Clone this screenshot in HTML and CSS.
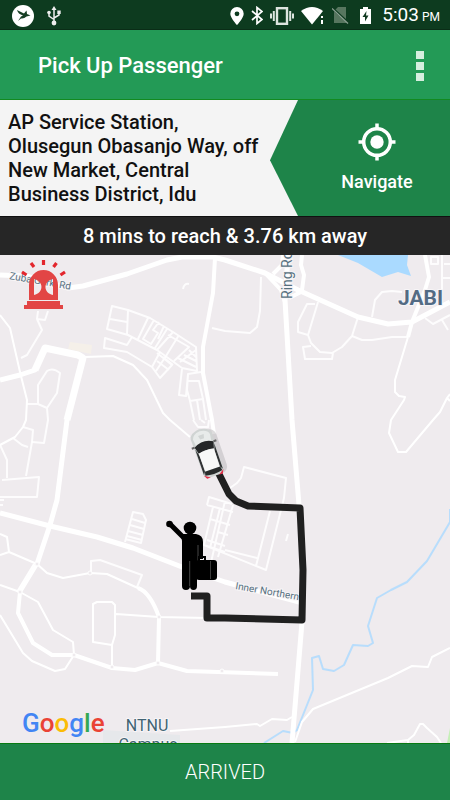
FILE: index.html
```html
<!DOCTYPE html>
<html lang="en">
<head>
<meta charset="utf-8">
<meta name="viewport" content="width=device-width, initial-scale=1">
<title>Pick Up Passenger</title>
<link rel="stylesheet" href="styles.css">
</head>
<body>
<div class="screen">
  <div class="status">
    <svg class="status-icon" width="22" height="22" viewBox="0 0 22 22" aria-hidden="true">
      <circle cx="11" cy="11" r="11" fill="#fff"/>
      <path d="M5 5 12 8.500 14.500 5.500 15 9 18.500 10.500 14.500 11.500Q12 14 9 13.500L6 16 9 11.500 11 10.500Q6 9 5 5Z" fill="#173f25"/>
    </svg>
    <svg class="status-icon" width="14" height="20" viewBox="0 0 14 20" fill="none" stroke="#eee" stroke-width="1.500" aria-hidden="true">
      <path d="M7 3V17M2 6V10L7 13.500M12 6V9L7 12"/>
      <path d="M7 0 9.500 4H4.500Z" fill="#eee" stroke="none"/>
      <circle cx="7" cy="17" r="2.400" fill="#eee" stroke="none"/>
      <circle cx="2" cy="6.500" r="1.800" fill="#eee" stroke="none"/>
      <path d="M10.300 4.500H13.700V8H10.300Z" fill="#eee" stroke="none"/>
    </svg>
    <div class="status-right">
      <svg width="14" height="18" viewBox="0 0 14 18" aria-hidden="true"><path fill="#fff" fill-rule="evenodd" d="M7 0A6.700 6.700 0 0 0 .3 6.700C.3 11 7 18 7 18S13.700 11 13.700 6.700A6.700 6.700 0 0 0 7 0ZM7 4.400A2.400 2.400 0 1 1 7 9.200A2.400 2.400 0 0 1 7 4.400Z"/></svg>
      <svg width="12" height="19" viewBox="0 0 12 19" fill="none" stroke="#fff" stroke-width="1.700" aria-hidden="true"><path d="M1 5 11 13.500 6 17.500V1.500L11 5.500 1 14"/></svg>
      <svg width="24" height="18" viewBox="0 0 24 18" fill="none" stroke="#dde5df" aria-hidden="true"><rect x="7" y="1.200" width="10" height="15.600" stroke-width="2.400"/><path d="M3.800 4V14M20.200 4V14" stroke-width="2"/><path d="M1 6.500V11.500M23 6.500V11.500" stroke-width="2"/></svg>
      <svg width="24" height="18" viewBox="0 0 24 18" fill="#fff" aria-hidden="true"><path d="M0 4Q11 -4 22 4L18 9 11 17.500Z"/><path d="M20 9h2v2h-2zM20 13h2v4h-2z"/></svg>
      <svg width="17" height="17" viewBox="0 0 17 17" aria-hidden="true"><path fill="#57765f" d="M6 0H14V12L3.500 2.500ZM2 4.500 14 15V16H2Z"/><path d="M0 1.500 16 16.500" stroke="#8fa295" stroke-width="1.200"/></svg>
      <svg class="battery" width="11" height="17" viewBox="0 0 11 17" aria-hidden="true"><path fill="#fff" d="M3 0H8V2H11V17H0V2H3Z"/><path d="M6.500 4 2.500 10H5V14.500L8.500 8.500H6Z" fill="#123b22"/></svg>
      <span class="clock"><span>5:03</span><small>PM</small></span>
    </div>
  </div>

  <header class="appbar">
    <h1>Pick Up Passenger</h1>
    <button class="menu" type="button" aria-label="More options"><i></i><i></i><i></i></button>
  </header>

  <section class="destination">
    <p class="address">AP Service Station, Olusegun Obasanjo Way, off New Market, Central Business District, Idu</p>
    <button class="navigate" type="button">
      <svg width="38" height="38" viewBox="0 0 38 38" aria-hidden="true"><circle cx="19" cy="19" r="13.300" fill="none" stroke="#fff" stroke-width="3.500"/><circle cx="19" cy="19" r="6.700" fill="#fff"/><path d="M19 .5V6M19 32V37.500M.5 19H6M32 19H37.500" stroke="#fff" stroke-width="3.500"/></svg>
      <span>Navigate</span>
    </button>
  </section>

  <p class="eta">8 mins to reach &amp; 3.76 km away</p>

  <main class="map">
    <svg class="map-canvas" viewBox="0 255 450 488" preserveAspectRatio="xMidYMin slice" role="img" aria-label="Route map">
      <rect x="0" y="255" width="450" height="488" fill="#efebee"/>
      <path d="M338 255 358 263 382 277 398 272 411 276 407 265 408 255Z" fill="#aadaff"/>
      <path d="M70 342 92 345 91 354 68 349Z" fill="#f5f0e9"/>
      <path d="M103 730 180 735V743H103Z" fill="#e6e8eb"/>
      <path d="M450 728 447 743H450Z" fill="#c5efb7"/>
      <path class="river" d="M450 509V522L427 561 407 582 391 590 377 598 368 626 373 643 368 646 353 645 344 665 334 671 323 669 319 656 312 658 313 690 297 730 293 733 283 731 264 743"/>
      <g class="lane">
        <path d="M38 311 37 319 45 320 48 311M37 319 42 330 27 355 21 358"/>
        <path d="M27 404H38V385L47 371Q53 367 60 373L57 393 47 408 48 420 44 443 32 442M38 404 47 408"/>
        <path d="M112 306 128 310 150 318 173 332 196 347 197 371 182 368 157 350 128 335 107 329ZM110 319 127 322M128 310 127 334M148 318 138 339M154 320 143 339 151 344 158 333 153 330 159 322M164 326 158 339M173 332 157 350M167 329 155 348M168 335 189 347 174 361M179 335 166 356M196 350 180 362M196 361 184 355M196 367 178 358M196 357 189 350"/>
        <path d="M132 337 127 345 105 338 104 348 127 352 152 367 160 378 172 365 157 353M160 352 152 367M166 356 156 371M157 361 169 370M163 357 173 365"/>
        <path d="M182 369 179 395 186 396 188 374 201 372M188 374 187 390 190 401 194 420M188 381 199 381 203 399 190 401M197 400 200 420M203 399 206 420"/>
        <path d="M183 289Q184 283 189 284"/>
        <path d="M212 328 225 331 250 333 257 327 260 311 261 277"/>
        <path d="M318 302 308 335 311 343 320 352 332 353 342 347 352 336 358 317M315 304H307L298 322V332L308 335M311 346 303 347 305 359H332L333 353"/>
        <path d="M352 336 362 340 372 340 392 337H408M372 317 375 300 382 292 392 291 402 292"/>
        <path d="M442 255V290M442 278H450M425 318 433 324 450 315M442 320 448 330M431 257H438V264H431ZM444 264H450"/>
        <path d="M23 427 33 430 32 442 26 476M13 438 22 445 28 447M0 445 7 460V478M2 480 39 477 37 497H0M0 500H4M0 505H3"/>
        <path d="M125 542 133 512 143 514 146 520 141 543 125 539M132 519 145 523M130 525 144 529M128 531 143 535M127 536 142 540"/>
        <path d="M91 573V561L100 560 142 575 137 587"/>
        <path d="M193 420 198 427H208L209 420M201 420 205 423"/>
        <path d="M230 488 237 483 241 478 244 467 286 478 284 498 266 570 204 545M270 511 256 566M225 550 257 558M207 505 209 497 232 504M207 505 233 512M213 507 204 545 225 552M218 557 233 505M220 508 210 548M210 519 230 525M218 532 228 535M225 501 207 580M207 540 225 546"/>
        <path d="M288 534 286 541"/>
      </g>
      <g class="street">
        <path d="M0 315 10 328 20 372 27 400 26 420 23 427 15 437 0 445"/>
        <path d="M85 357 113 356 133 365 147 380 163 413 170 420 190 437"/>
        <path d="M408 337 395 380V392L399 396 405 397 404 400 391 420 389 433 398 452H406L433 420 440 412 447 398 450 394M447 398 450 401"/>
        <path d="M0 534 7 537 9 552 0 555M9 552 37 564 47 573 63 578 90 573 107 574 140 589M0 585 20 592 38 602 53 630 73 642 74 655 65 669 55 671 32 661 23 653 0 615"/>
        <path d="M93 642V604L97 602H112L115 605 115 635 112 645ZM112 645V667M116 614 159 617 207 618M34 564 17 592"/>
        <path d="M450 648 432 657 428 667 412 666 388 678 313 709 302 722 295 742M170 731 225 727 257 724 260 726 272 719 287 720 292 717"/>
        <path d="M387 743 408 740 414 735 420 724H423L427 728 437 737 441 743M408 740V743"/>
      </g>
      <g class="road">
        <path d="M215 258 213 293 203 347V373L212 420 214 434"/>
        <path d="M425 255 429 277 425 290 412 322 408 337"/>
        <path d="M302 255 301 265 304 275 302 290M265 273 281 290 285 302M273 274 282 265 283 255M303 291 289 298"/>
        <path d="M37 564 20 592 18 613 33 643 52 655 74 655 112 668 135 670 158 663 187 671 278 674M138 588Q150 592 159 617L158 663"/>
      </g>
      <g class="highway">
        <path d="M0 275 26 276M26 276 68 288 83 286 127 274 167 260 182 257H213L225 260 265 273 298 290 358 317 388 324 412 322 450 302"/>
        <path d="M0 380 20 375 35 370 45 348 78 355 83 358 67 420 57 500 50 525 37 564"/>
        <path d="M0 513 50 526 97 537 133 548 182 567 225 582 303 603"/>
        <path d="M288 255 285 300 292 420 299 505M302 622 292 743"/>
      </g>
      <path class="trunk" d="M35 370 45 348 78 355 83 358 67 420"/>
      <g class="junction"><circle cx="37" cy="564" r="2"/><circle cx="90" cy="573" r="2"/><circle cx="20" cy="592" r="2"/><circle cx="74" cy="655" r="2"/><circle cx="112" cy="667" r="2"/><circle cx="158" cy="663" r="2"/><circle cx="159" cy="617" r="2"/><circle cx="222" cy="671" r="2"/></g>

      <g class="label">
        <text class="minor" transform="translate(9 279) rotate(10)">Zuba Garki Rd</text>
        <text class="ring" transform="translate(292 299) rotate(-90)">Ring Road</text>
        <text class="minor" transform="translate(235 589) rotate(10)">Inner Northern</text>
        <text class="district" x="398" y="305">JABI</text>
        <text class="campus" x="147" y="731" text-anchor="middle">NTNU</text>
        <text class="campus" x="148" y="750" text-anchor="middle">Campus</text>
      </g>

      <path class="route" d="M217 470 229 494 236 501 248 506 300 508 303 570 302 620 225 618H207V596H191"/>

      <g transform="translate(207 453) rotate(-19)">
        <rect x="-8" y="-22" width="23" height="46" rx="7" fill="#aaa8aa" opacity=".4"/>
        <path d="M-11 -18Q-10 -24 0 -25Q10 -24 11 -18L10.500 19Q10 24 6 24H-6Q-10 24 -10.500 19Z" fill="#d0d4d3"/>
        <path d="M-9 -17Q-8 -22 0 -23Q8 -22 9 -17L8 -10Q0 -13 -8 -10Z" fill="#e8ebea"/>
        <path d="M-3 -19H3L2 -15H-2Z" fill="#d1d5d4"/>
        <path d="M-10 -9Q0 -15 10 -9L8 -2Q0 -4 -8 -2Z" fill="#252728"/>
        <path d="M-10 -7-8 0V17L-10 20ZM10 -7 8 0V17L10 20Z" fill="#303334"/>
        <path d="M-8 -2Q0 -4 8 -2L7.500 17H-7.500Z" fill="#f7f8f7"/>
        <path d="M-8 17H8L9 21Q0 23 -9 21Z" fill="#292c2c"/>
        <path d="M-13 -10H-10V-8H-13ZM10 -10H13V-8H10Z" fill="#666"/>
        <path d="M-9 22-6 24H-8ZM9 22 6 24H8Z" fill="#e32f49" stroke="#e32f49"/>
      </g>

      <g>
        <circle cx="190" cy="528" r="6.300"/>
        <path d="M170 524 184 538" stroke="#000" stroke-width="5"/>
        <circle cx="169.500" cy="524" r="3.300"/>
        <path d="M181 534H196Q203 535 203 542V559H198V579H197V586Q197 590 193.500 590Q190 590 190 586Q190 590 186 590Q182 590 182 586V541Z"/>
        <path d="M189.700 561V586M198 545V561" stroke="#777" stroke-width=".6"/>
        <path d="M199 562V557H205V562" fill="none" stroke="#000" stroke-width="2"/>
        <rect x="196" y="560" width="21" height="20" rx="3"/>
        <path d="M210.500 561V579" stroke="#555" stroke-width=".7"/>
      </g>

      <g fill="#e24545">
        <path fill-rule="evenodd" d="M29 300V285A14.500 15 0 0 1 58 285V300ZM34 279V295C44 293 44 281 34 279ZM53 279V295C43 293 43 281 53 279Z"/>
        <path d="M27 301H60V305H63V309H24V305H27Z"/>
        <path d="M43.500 260V265M31 263 34 267M56.500 263 53.500 267M22 272 26.500 275M65 272 60.500 275" stroke="#e3262d" stroke-width="3.200"/>
      </g>

      <text class="logo" x="22" y="732"><tspan class="blue">G</tspan><tspan class="red">o</tspan><tspan class="yellow">o</tspan><tspan class="blue">g</tspan><tspan class="green">l</tspan><tspan class="red">e</tspan></text>
    </svg>
  </main>

  <button class="arrived" type="button">ARRIVED</button>
</div>
</body>
</html>
```
FILE: styles.css
```css
* { box-sizing: border-box; }

body {
  margin: 0;
  font-family: Roboto, "Liberation Sans", sans-serif;
}

button {
  border: 0;
  font-family: inherit;
  cursor: pointer;
}

.screen {
  display: flex;
  flex-direction: column;
  min-height: 100vh;
}

.status {
  display: flex;
  align-items: center;
  gap: 13px;
  height: 30px;
  padding: 2px 10px 0 12px;
  background: #0d3b1f;
  border-bottom: 1px solid #0a2d17;
  color: #fff;
}

.status-right {
  display: flex;
  align-items: center;
  gap: 7px;
  margin-left: auto;
}

.status-right .battery { margin: 0 4px; }

.clock {
  display: flex;
  align-items: baseline;
  gap: 3px;
  font-size: 19px;
  line-height: 27px;
  font-weight: 400;
  white-space: nowrap;
}

.clock small { font-size: 12px; }

.appbar {
  display: flex;
  align-items: center;
  justify-content: space-between;
  height: 70px;
  padding: 3px 18px 0 38px;
  background: #239a56;
  border-bottom: 1px solid #128a20;
}

.appbar h1 {
  margin: 0;
  color: #fff;
  font-size: 22px;
  line-height: 28px;
  font-weight: 500;
}

.menu {
  display: grid;
  gap: 3px;
  padding: 0 8px;
  background: none;
}

.menu i {
  width: 8px;
  height: 8px;
  background: #d6eedf;
}

.destination {
  display: flex;
  background: #f4f4f4;
}

.address {
  flex: 1;
  margin: 0;
  padding: 10px 8px;
  color: #111;
  font-size: 20px;
  line-height: 24px;
  font-weight: 500;
}

.navigate {
  display: flex;
  flex-direction: column;
  align-items: center;
  justify-content: center;
  gap: 10px;
  width: 40%;
  padding: 0 0 0 34px;
  background: #1e8449;
  clip-path: polygon(28px 0, 100% 0, 100% 100%, 28px 100%, 0 52%);
  color: #fff;
  font-size: 18px;
  line-height: 22px;
  font-weight: 500;
}

.eta {
  margin: 0;
  padding: 8px 0 7px;
  background: #262626;
  border-top: 1px solid #111;
  color: #fff;
  font-size: 20px;
  line-height: 23px;
  font-weight: 500;
  text-align: center;
}

.map {
  display: flex;
  flex: 1;
  background: #efebee;
}

.map-canvas {
  display: block;
  width: 100%;
}

.river,
.lane,
.street,
.road,
.highway,
.trunk,
.route {
  fill: none;
  stroke: #fff;
  stroke-linejoin: round;
}

.river { stroke: #aadaff; stroke-width: 2px; stroke-opacity: 0.8; }
.lane { stroke-width: 2px; stroke-opacity: 0.85; }
.street { stroke-width: 2px; }
.road { stroke-width: 4px; }
.highway { stroke-width: 5px; }
.trunk { stroke-width: 7px; }
.route { stroke: #202020; stroke-width: 7px; }

.junction {
  fill: #efebee;
  stroke: #fff;
  stroke-width: 1px;
}

.label text {
  fill: #57717f;
  stroke: #f7f5f7;
  stroke-width: 2px;
  paint-order: stroke;
}

.label .minor { font-size: 10px; }
.label .ring { font-size: 14px; }
.label .district { font-size: 21px; font-weight: 700; fill: #536b84; }
.label .campus { font-size: 16px; fill: #416373; }

.logo { font-size: 26px; font-weight: 500; }
.blue { fill: #4285f4; }
.red { fill: #ea4335; }
.yellow { fill: #fbbc05; }
.green { fill: #34a853; }

.arrived {
  height: 57px;
  background: #1e8449;
  border-top: 1px solid #087a12;
  color: #fff;
  font-size: 20px;
  font-weight: 300;
}
```
